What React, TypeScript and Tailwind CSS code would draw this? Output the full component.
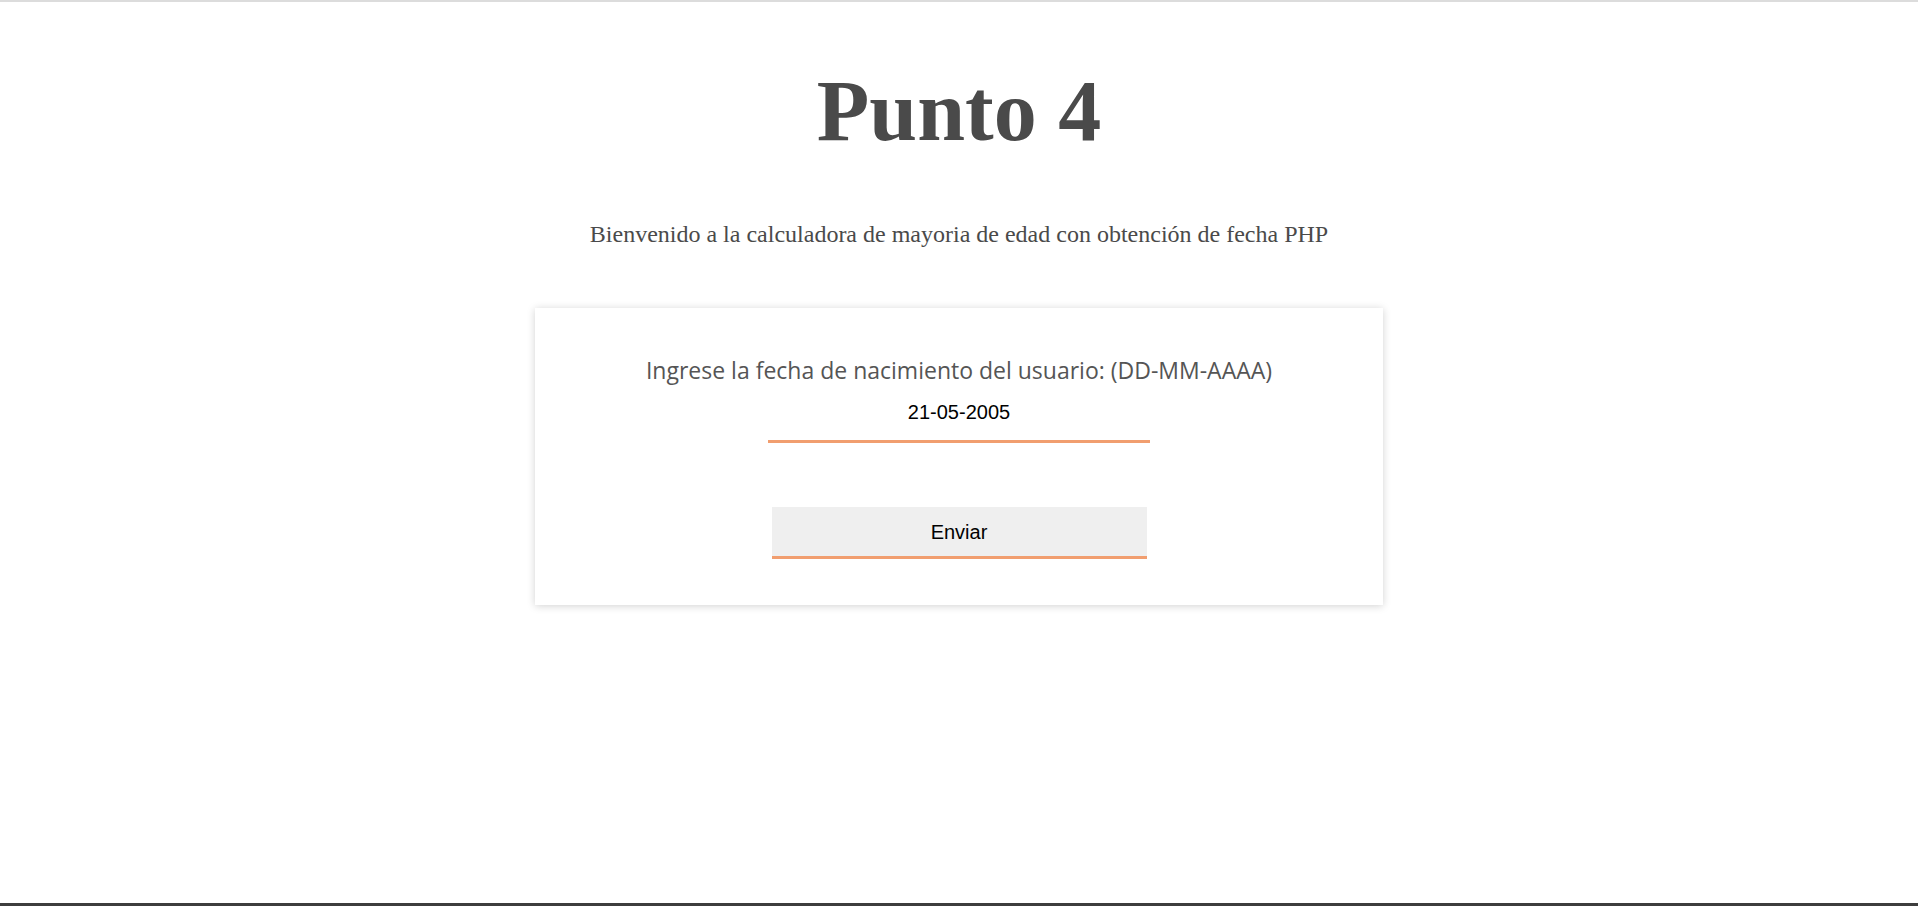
export default function App() {
  return (
    <div className="h-screen w-full bg-white flex flex-col">
      <div className="h-[2px] w-full bg-[#dcdcdc]" />
      <div className="flex-1 flex flex-col items-center">
        <h1 className="mt-[66px] text-[86px] leading-[86px] font-bold text-[#4a4a4a] font-['Liberation_Serif',serif]">
          Punto 4
        </h1>
        <p className="mt-[68px] text-[24px] leading-[24px] text-[#4a4a4a] font-['Liberation_Serif',serif]">
          Bienvenido a la calculadora de mayoria de edad con obtención de fecha PHP
        </p>
        <form
          className="mt-[62px] w-[848px] bg-white shadow-[0_1px_8px_rgba(0,0,0,0.18)] flex flex-col items-center pt-[51px] pb-[46px]"
          onSubmit={(e) => e.preventDefault()}
        >
          <label
            htmlFor="fecha"
            className="text-[23px] leading-[23px] text-[#555555] font-['Open_Sans',sans-serif]"
          >
            Ingrese la fecha de nacimiento del usuario: (DD-MM-AAAA)
          </label>
          <input
            id="fecha"
            type="text"
            defaultValue="21-05-2005"
            className="mt-[3px] w-[45%] h-[58px] p-0 border-b-[3px] border-[#f19e6f] bg-transparent text-center text-[20px] text-black outline-none font-['Liberation_Sans',Arial,sans-serif]"
          />
          <button
            type="submit"
            className="mt-[64px] w-[375px] h-[52px] bg-[#efefef] border-b-[3px] border-[#f19e6f] text-[20px] text-black font-['Liberation_Sans',Arial,sans-serif]"
          >
            Enviar
          </button>
        </form>
      </div>
      <div className="h-[3px] w-full bg-[#3d3d3d]" />
    </div>
  );
}
